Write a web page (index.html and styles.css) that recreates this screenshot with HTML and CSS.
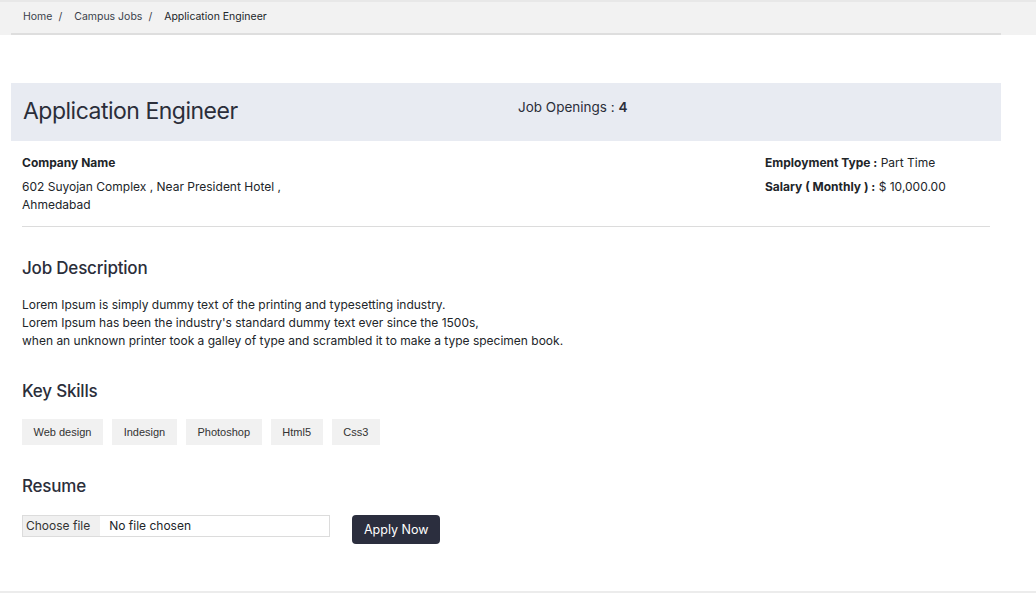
FILE: index.html
```html
<!DOCTYPE html>
<html lang="en">

<head>
    <meta charset="UTF-8">
    <meta name="viewport" content="width=device-width, initial-scale=1.0">
    <title>Application Engineer</title>
    <link rel="stylesheet" href="styles.css">
</head>

<body>
    <div class="topbar">
        <div class="breadcrumb">
            <a href="#">Home</a><span class="sep">/</span>
            <a href="#">Campus Jobs</a><span class="sep">/</span>
            <span class="current">Application Engineer</span>
        </div>
    </div>

    <div class="job-page">
        <div class="job-header">
            <h1>Application Engineer</h1>
            <div class="openings">Job Openings : <b>4</b></div>
        </div>

        <div class="job-info">
            <div class="company">
                <h4>Company Name</h4>
                <p>602 Suyojan Complex , Near President Hotel ,<br>Ahmedabad</p>
            </div>
            <div class="terms">
                <p><b>Employment Type :</b> Part Time</p>
                <p><b>Salary ( Monthly ) :</b> $ 10,000.00</p>
            </div>
        </div>

        <hr>

        <div class="section">
            <h3>Job Description</h3>
            <p>Lorem Ipsum is simply dummy text of the printing and typesetting industry.<br>
                Lorem Ipsum has been the industry's standard dummy text ever since the 1500s,<br>
                when an unknown printer took a galley of type and scrambled it to make a type specimen book.</p>
        </div>

        <div class="section">
            <h3>Key Skills</h3>
            <div class="skills">
                <span class="skill">Web design</span>
                <span class="skill">Indesign</span>
                <span class="skill">Photoshop</span>
                <span class="skill">Html5</span>
                <span class="skill">Css3</span>
            </div>
        </div>

        <div class="section">
            <h3>Resume</h3>
            <form class="resume-form">
                <label class="file-input">
                    <span class="file-btn">Choose file</span>
                    <span class="file-name">No file chosen</span>
                </label>
                <button type="submit" class="btn">Apply Now</button>
            </form>
        </div>
    </div>

    <div class="footer-line"></div>
</body>

</html>
```

FILE: styles.css
```css
body {
    font-family: Inter, "Noto Sans", sans-serif;
    margin: 0;
    color: #212529;
    background-color: #fff;
}

.topbar {
    background-color: #f2f2f2;
    border-top: 2px solid #e8e8e8;
}

.breadcrumb {
    margin: 0 35px 0 11px;
    padding: 0 12px 3px;
    height: 28px;
    display: flex;
    align-items: center;
    font-size: 10.5px;
    border-bottom: 2px solid #dedede;
}

.breadcrumb a {
    color: #3a3f4b;
    text-decoration: none;
}

.breadcrumb .sep {
    color: #3a3f4b;
    margin: 0 12px 0 6px;
}

.breadcrumb .current {
    color: #212529;
}

.job-page {
    margin: 48px 0 0 11px;
    width: 990px;
}

.job-header {
    background-color: #e8ebf2;
    height: 58px;
    display: flex;
}

.job-header h1 {
    width: 471px;
    margin: 0;
    padding: 14px 12px 0;
    font-size: 23px;
    font-weight: 400;
    line-height: 29px;
    letter-spacing: -0.5px;
    color: #2b2e3a;
}

.openings {
    padding: 15px 12px 0;
    font-size: 13.5px;
    line-height: 18px;
    color: #2b2e3a;
}

.openings b {
    font-weight: 600;
}

.job-info {
    display: flex;
    padding: 13px 11px 0;
}

.company {
    width: 743px;
}

.company h4 {
    margin: 0 0 6px;
    font-size: 12px;
    line-height: 18px;
    font-weight: 700;
}

.company p,
.terms p {
    margin: 0;
    font-size: 12px;
    line-height: 18px;
}

.terms p {
    margin-bottom: 6px;
}

.terms b {
    font-weight: 700;
}

hr {
    margin: 12px 11px 1px;
    border: none;
    border-top: 1px solid #dcdcdc;
}

.section {
    padding: 0 11px;
}

.section h3 {
    margin: 30px 0 0;
    font-size: 17px;
    font-weight: 500;
    line-height: 22px;
    letter-spacing: -0.2px;
    color: #2b2e3a;
}

.section p {
    margin: 17px 0 0;
    font-size: 12px;
    line-height: 18px;
}

.skills {
    display: flex;
    gap: 9.25px;
    margin: 17px 0 5px;
}

.skill {
    background-color: #f1f1f1;
    font-family: "Liberation Sans", Arial, sans-serif;
    font-size: 11px;
    color: #333;
    height: 26px;
    line-height: 26px;
    padding: 0 11.5px;
}

.resume-form {
    display: flex;
    align-items: flex-start;
    gap: 22px;
    margin-top: 18px;
}

.file-input {
    display: flex;
    width: 306px;
    height: 20px;
    border: 1px solid #dcdcdc;
    font-size: 12px;
    line-height: 20px;
}

.file-btn {
    background-color: #f0f0f0;
    padding: 0 10px 0 3px;
    color: #333;
}

.file-name {
    padding-left: 9px;
}

.btn {
    background-color: #2b2e3e;
    color: #fff;
    border: none;
    border-radius: 4px;
    padding: 0 12px;
    height: 29px;
    font-family: Inter, sans-serif;
    font-size: 12.5px;
    cursor: pointer;
}

.btn:hover {
    background-color: #1d1f2a;
}

.footer-line {
    margin-top: 47px;
    border-top: 2px solid #ececec;
}
```
